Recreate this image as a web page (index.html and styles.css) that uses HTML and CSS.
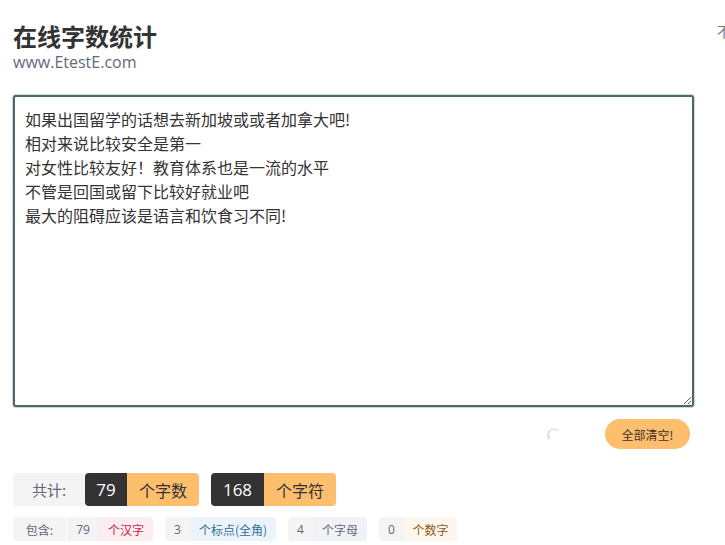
FILE: index.html
```html
<!DOCTYPE html>
<html lang="zh">
<head>
<meta charset="utf-8">
<title>在线字数统计</title>
<link rel="stylesheet" href="styles.css">
</head>
<body>
<div class="page">
  <main class="main">
    <header class="head">
      <h1 class="title">在线字数统计</h1>
      <div class="site">www.EtestE.com</div>
    </header>
    <textarea class="editor">如果出国留学的话想去新加坡或或者加拿大吧!
相对来说比较安全是第一
对女性比较友好！教育体系也是一流的水平
不管是回国或留下比较好就业吧
最大的阻碍应该是语言和饮食习不同!</textarea>
    <div class="actions">
      <span class="spinner"></span>
      <button class="clear">全部清空!</button>
    </div>
    <div class="totals">
      <span class="lbl">共计:</span>
      <span class="num">79</span><span class="unit">个字数</span>
      <span class="gap"></span>
      <span class="num num-l">168</span><span class="unit">个字符</span>
    </div>
    <div class="details">
      <span class="dl">包含:</span>
      <span class="dn">79</span><span class="du du-red">个汉字</span>
      <span class="dn dn-first">3</span><span class="du du-blue">个标点(全角)</span>
      <span class="dn dn-first">4</span><span class="du du-grey">个字母</span>
      <span class="dn dn-first">0</span><span class="du du-amber">个数字</span>
    </div>
  </main>
  <aside class="side">不</aside>
</div>
</body>
</html>
```
FILE: styles.css
```css
html { overflow: hidden; }
body {
  margin: 0;
  background: #fff;
  font-family: "Noto Sans", "Noto Sans CJK SC", sans-serif;
  color: #333;
}
.page {
  display: flex;
  width: 760px;
}
.main {
  width: 681px;
  padding-left: 13px;
  padding-top: 18px;
  flex: none;
}
.side {
  margin-left: 23px;
  padding-top: 21px;
  font-size: 14px;
  color: #777;
  font-family: "Noto Sans CJK SC", sans-serif;
}
.title {
  margin: 0;
  font-size: 24px;
  line-height: 36px;
  font-weight: 700;
  color: #333;
  font-family: "Noto Sans CJK SC", sans-serif;
}
.site {
  font-size: 16px;
  line-height: 18px;
  color: #5f6a7d;
  font-family: "Open Sans", "Noto Sans", sans-serif;
  margin-top: -1px;
}
.editor {
  display: block;
  box-sizing: border-box;
  width: 681px;
  height: 312px;
  margin-top: 24px;
  padding: 10px 10px;
  border: 2px solid #4f676c;
  border-radius: 3px;
  box-shadow: 0 0 0 1px #cdd9dd;
  font-family: "Noto Sans CJK SC", sans-serif;
  font-size: 16px;
  line-height: 24px;
  color: #333;
  resize: vertical;
  outline: none;
}
.actions {
  display: flex;
  align-items: center;
  justify-content: flex-end;
  gap: 44px;
  height: 30px;
  margin-top: 12px;
  padding-right: 4px;
}
.spinner {
  width: 10px;
  height: 10px;
  border-radius: 50%;
  border: 2px solid transparent;
  border-left-color: #dcdcdc;
  border-top-color: #e8e8e8;
  margin-top: 1px;
}
.clear {
  height: 30px;
  width: 85px;
  border: none;
  border-radius: 15px;
  background: #fdbf6e;
  color: #3a3226;
  font-family: "Noto Sans CJK SC", sans-serif;
  font-size: 12px;
  padding: 0;
}
.totals {
  display: flex;
  align-items: stretch;
  height: 33px;
  margin-top: 24px;
}
.totals > span {
  display: flex;
  align-items: center;
  justify-content: center;
}
.lbl {
  width: 72px;
  background: #f4f4f5;
  color: #5f6677;
  font-size: 15px;
  border-radius: 4px 0 0 4px;
  font-family: "Noto Sans CJK SC", sans-serif;
}
.num {
  width: 42px;
  background: #333;
  color: #fff;
  font-size: 17px;
  border-radius: 4px 0 0 4px;
  font-family: "Open Sans", sans-serif;
}
.num-l { width: 53px; }
.unit {
  width: 72px;
  background: #fdbf6e;
  color: #333;
  font-size: 16px;
  border-radius: 0 4px 4px 0;
  font-family: "Noto Sans CJK SC", sans-serif;
}
.gap { width: 12px; }
.details {
  display: flex;
  height: 24px;
  margin-top: 11px;
  font-size: 12px;
  font-family: "Noto Sans CJK SC", sans-serif;
}
.details > span {
  display: flex;
  align-items: center;
  justify-content: center;
}
.dl {
  width: 53px;
  background: #f4f4f5;
  color: #5f6677;
  border-radius: 4px 0 0 4px;
}
.dn {
  width: 32px;
  margin-left: 1px;
  background: #f4f4f5;
  color: #5f6677;
  font-family: "Open Sans", sans-serif;
}
.dn-first {
  width: 25px;
  margin-left: 12px;
  border-radius: 4px 0 0 4px;
}
.du {
  width: 54px;
  border-radius: 0 4px 4px 0;
}
.du-red { background: #fdedf1; color: #c0284c; }
.du-blue { width: 86px; background: #ebf4fb; color: #2d6f96; }
.du-grey { background: #f0f2f5; color: #5f6b7a; }
.du-amber { width: 53px; background: #fdf6ec; color: #8a5a18; }
```
